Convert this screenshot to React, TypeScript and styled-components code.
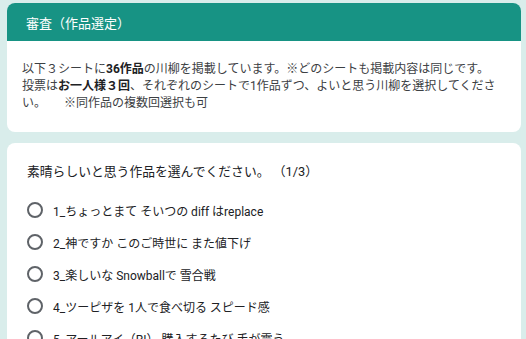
import React from "react";
import styled, { createGlobalStyle } from "styled-components";

const GlobalStyle = createGlobalStyle`
  html, body {
    margin: 0;
    padding: 0;
    background: #d9edeb;
  }
  body {
    font-family: Roboto, "Noto Sans CJK JP", sans-serif;
    color: #202124;
  }
`;

const Page = styled.div`
  display: flex;
  flex-direction: column;
  gap: 11px;
  padding: 3px 5px 0 7px;
`;

const Card = styled.section`
  background: #fff;
  border-radius: 8px;
  overflow: hidden;
`;

const CardHeader = styled.header`
  background: #179384;
  color: #fff;
  font-size: 13px;
  height: 38px;
  display: flex;
  align-items: center;
  padding: 0 19px;
`;

const Description = styled.p`
  margin: 0;
  padding: 20px 15px 20px 15px;
  font-size: 12px;
  line-height: 17px;
  color: #3c4043;
  b {
    color: #202124;
    font-weight: 700;
  }
`;

const Question = styled.div`
  padding: 20px 20px 0 20px;
`;

const QuestionTitle = styled.div`
  font-size: 12.8px;
  line-height: 18px;
  margin-bottom: 13px;
`;

const Options = styled.ul`
  list-style: none;
  margin: 0;
  padding: 0;
  display: flex;
  flex-direction: column;
`;

const Option = styled.li`
  display: flex;
  align-items: center;
  gap: 10px;
  height: 32px;
  font-size: 12px;
  color: #202124;
`;

const Radio = styled.span`
  width: 16px;
  height: 16px;
  box-sizing: border-box;
  border: 2px solid #5f6368;
  border-radius: 50%;
  flex: none;
`;

const works = [
  "1_ちょっとまて そいつの diff はreplace",
  "2_神ですか このご時世に また値下げ",
  "3_楽しいな Snowballで 雪合戦",
  "4_ツーピザを 1人で食べ切る スピード感",
  "5_アールアイ（RI） 購入するたび 手が震う",
];

export default function App() {
  return (
    <>
      <GlobalStyle />
      <Page>
        <Card>
          <CardHeader>審査（作品選定）</CardHeader>
          <Description>
            以下３シートに<b>36作品</b>の川柳を掲載しています。※どのシートも掲載内容は同じです。
            <br />
            投票は<b>お一人様３回</b>、それぞれのシートで1作品ずつ、よいと思う川柳を選択してください。　　※同作品の複数回選択も可
          </Description>
        </Card>
        <Card>
          <Question>
            <QuestionTitle>素晴らしいと思う作品を選んでください。 （1/3）</QuestionTitle>
            <Options>
              {works.map((w) => (
                <Option key={w}>
                  <Radio />
                  {w}
                </Option>
              ))}
            </Options>
          </Question>
        </Card>
      </Page>
    </>
  );
}
